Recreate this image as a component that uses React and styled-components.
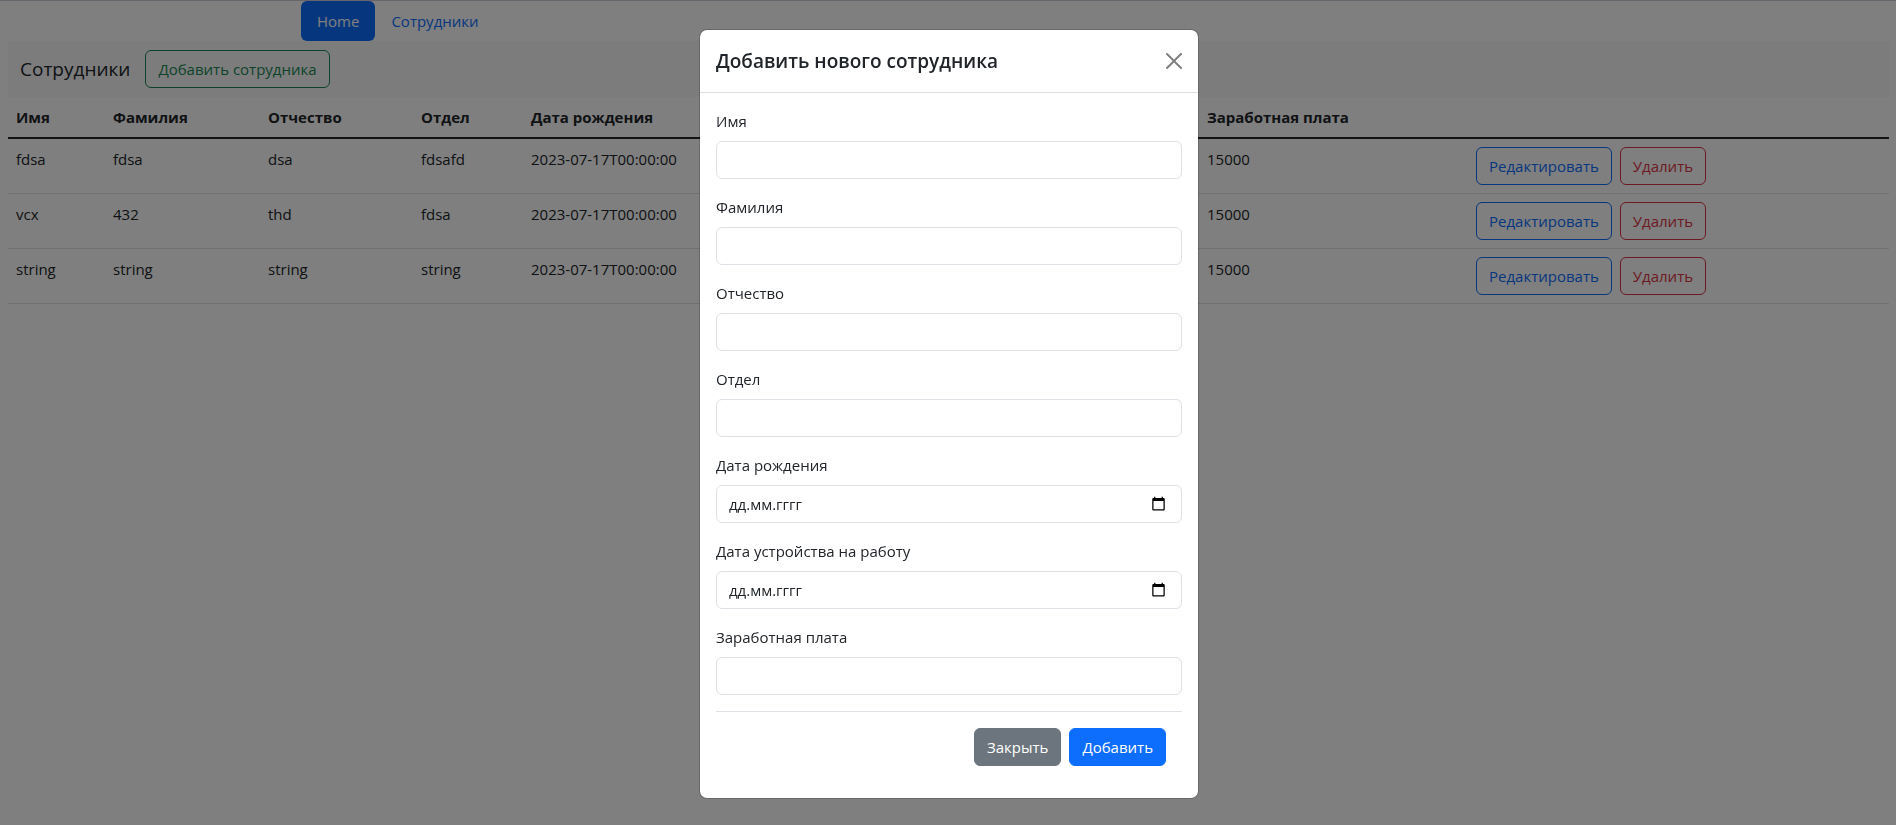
import React from "react";
import styled, { createGlobalStyle } from "styled-components";

const Global = createGlobalStyle`
  *, *::before, *::after { box-sizing: border-box; }
  body {
    margin: 0;
    background: #fff;
    color: #212529;
    font-family: "Open Sans", "Noto Sans", sans-serif;
    font-size: 15px;
    line-height: 24px;
  }
`;

const Page = styled.div`
  min-height: 100vh;
  border-top: 1px solid #cbcad6;
`;

const Nav = styled.nav`
  display: flex;
  width: 1320px;
  max-width: 100%;
  margin: 0 auto;
  padding: 0 13px;
`;

const NavLink = styled.a`
  padding: 8px 16px;
  border-radius: 6px;
  text-decoration: none;
  color: ${(p) => (p.$active ? "#fff" : "#0d6efd")};
  background: ${(p) => (p.$active ? "#0d6efd" : "transparent")};
`;

const Content = styled.main`
  padding: 0 7px 0 8px;
`;

const Toolbar = styled.div`
  display: flex;
  align-items: center;
  gap: 15px;
  padding: 9px 12px;
  background: #f8f9fa;
`;

const Brand = styled.span`
  font-size: 19px;
  line-height: 30px;
`;

const tones = {
  success: "#198754",
  primary: "#0d6efd",
  danger: "#dc3545",
  secondary: "#6c757d",
};

const Button = styled.button`
  padding: 6px 12px;
  border: 1px solid ${(p) => tones[p.$tone]};
  border-radius: 6px;
  background: ${(p) => (p.$solid ? tones[p.$tone] : "transparent")};
  color: ${(p) => (p.$solid ? "#fff" : tones[p.$tone])};
  font: inherit;
  cursor: pointer;
`;

const Table = styled.table`
  width: 100%;
  border-collapse: collapse;
  text-align: left;
`;

const HeadCell = styled.th`
  width: ${(p) => p.$width};
  padding: 8px;
  font-weight: 700;
  border-bottom: 2px solid #212529;
`;

const Cell = styled.td`
  padding: 8px;
  vertical-align: top;
  border-bottom: 1px solid #dee2e6;
`;

const Actions = styled.div`
  display: flex;
  gap: 8px;
`;

const Backdrop = styled.div`
  position: fixed;
  inset: 0;
  overflow: auto;
  padding: 29px 0 26px 2px;
  background: rgba(0, 0, 0, 0.5);
`;

const Dialog = styled.section`
  width: 500px;
  max-width: 100%;
  margin: 0 auto;
  border: 1px solid rgba(0, 0, 0, 0.175);
  border-radius: 8px;
  background: #fff;
  background-clip: padding-box;
`;

const DialogHeader = styled.header`
  display: flex;
  align-items: center;
  justify-content: space-between;
  padding: 16px;
  border-bottom: 1px solid #dee2e6;
`;

const DialogTitle = styled.h5`
  margin: 0;
  font-size: 19px;
  font-weight: 600;
  line-height: 30px;
`;

const CloseButton = styled.button`
  display: flex;
  padding: 0;
  border: 0;
  background: none;
  opacity: 0.5;
  cursor: pointer;
`;

const Form = styled.form`
  display: flex;
  flex-direction: column;
  gap: 16px;
  padding: 16px;
`;

const Field = styled.div`
  display: flex;
  flex-direction: column;
  gap: 8px;
`;

const Control = styled.div`
  display: flex;
  align-items: center;
  height: 38px;
  padding: 0 12px;
  border: 1px solid #dee2e6;
  border-radius: 6px;
`;

const Input = styled.input`
  flex: 1;
  min-width: 0;
  padding: 0;
  border: 0;
  outline: 0;
  background: none;
  color: #212529;
  font: inherit;
  &::placeholder { color: #212529; opacity: 1; }
`;

const PickerButton = styled.button`
  display: flex;
  padding: 0 3px 1px;
  border: 0;
  background: none;
  cursor: pointer;
`;

const DialogFooter = styled.footer`
  display: flex;
  justify-content: flex-end;
  gap: 8px;
  padding: 16px;
  border-top: 1px solid #dee2e6;
`;

const CloseIcon = () => (
  <svg width="16" height="16" viewBox="0 0 16 16" aria-hidden="true">
    <path d="M.293.293a1 1 0 0 1 1.414 0L8 6.586 14.293.293a1 1 0 1 1 1.414 1.414L9.414 8l6.293 6.293a1 1 0 0 1-1.414 1.414L8 9.414l-6.293 6.293a1 1 0 0 1-1.414-1.414L6.586 8 .293 1.707a1 1 0 0 1 0-1.414z" />
  </svg>
);

const CalendarIcon = () => (
  <svg width="15" height="15" viewBox="0 0 24 24" aria-hidden="true">
    <path d="M20 3h-1V1h-2v2H7V1H5v2H4c-1.100 0-2 .9-2 2v16c0 1.100.9 2 2 2h16c1.100 0 2-.9 2-2V5c0-1.100-.9-2-2-2zm0 18H4V8h16v13z" />
  </svg>
);

const columns = [
  ["Имя", "97px"],
  ["Фамилия", "155px"],
  ["Отчество", "153px"],
  ["Отдел", "110px"],
  ["Дата рождения", "310px"],
  ["Дата устройства на работу", "366px"],
  ["Заработная плата", "269px"],
  ["", "auto"],
];

const employees = [
  ["fdsa", "fdsa", "dsa", "fdsafd", "2023-07-17T00:00:00", "2023-07-17T00:00:00", "15000"],
  ["vcx", "432", "thd", "fdsa", "2023-07-17T00:00:00", "2023-07-17T00:00:00", "15000"],
  ["string", "string", "string", "string", "2023-07-17T00:00:00", "2023-07-17T00:00:00", "15000"],
];

const fields = [
  { id: "firstName", label: "Имя" },
  { id: "lastName", label: "Фамилия" },
  { id: "patronymic", label: "Отчество" },
  { id: "department", label: "Отдел" },
  { id: "birthDate", label: "Дата рождения", date: true },
  { id: "hireDate", label: "Дата устройства на работу", date: true },
  { id: "salary", label: "Заработная плата" },
];

export default function App() {
  return (
    <>
      <Global />
      <Page>
        <Nav>
          <NavLink href="#home" $active>Home</NavLink>
          <NavLink href="#employees">Сотрудники</NavLink>
        </Nav>
        <Content>
          <Toolbar>
            <Brand>Сотрудники</Brand>
            <Button type="button" $tone="success">Добавить сотрудника</Button>
          </Toolbar>
          <Table>
            <thead>
              <tr>
                {columns.map(([name, width], i) => (
                  <HeadCell key={i} scope="col" $width={width}>{name}</HeadCell>
                ))}
              </tr>
            </thead>
            <tbody>
              {employees.map((row, r) => (
                <tr key={r}>
                  {row.map((value, c) => <Cell key={c}>{value}</Cell>)}
                  <Cell>
                    <Actions>
                      <Button type="button" $tone="primary">Редактировать</Button>
                      <Button type="button" $tone="danger">Удалить</Button>
                    </Actions>
                  </Cell>
                </tr>
              ))}
            </tbody>
          </Table>
        </Content>
      </Page>
      <Backdrop>
        <Dialog role="dialog" aria-modal="true" aria-labelledby="dialog-title">
          <DialogHeader>
            <DialogTitle id="dialog-title">Добавить нового сотрудника</DialogTitle>
            <CloseButton type="button" aria-label="Закрыть"><CloseIcon /></CloseButton>
          </DialogHeader>
          <Form>
            {fields.map(({ id, label, date }) => (
              <Field key={id}>
                <label htmlFor={id}>{label}</label>
                <Control>
                  <Input id={id} type="text" placeholder={date ? "дд.мм.гггг" : undefined} />
                  {date && (
                    <PickerButton type="button" aria-label="Выбрать дату"><CalendarIcon /></PickerButton>
                  )}
                </Control>
              </Field>
            ))}
            <DialogFooter>
              <Button type="button" $tone="secondary" $solid>Закрыть</Button>
              <Button type="submit" $tone="primary" $solid>Добавить</Button>
            </DialogFooter>
          </Form>
        </Dialog>
      </Backdrop>
    </>
  );
}
